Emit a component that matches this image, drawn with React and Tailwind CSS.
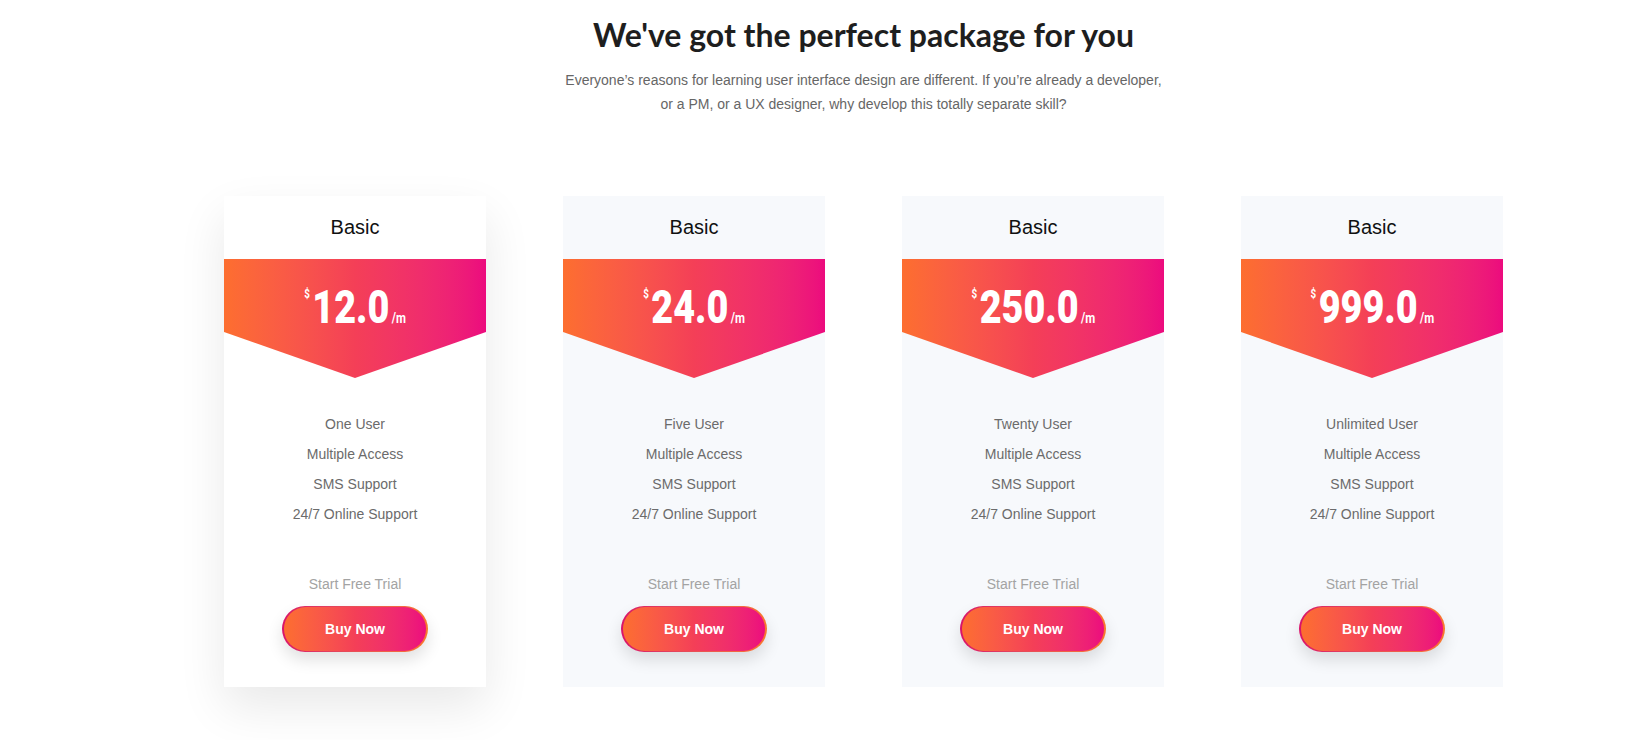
const plans = [
  { price: "12.0", users: "One User", featured: true },
  { price: "24.0", users: "Five User" },
  { price: "250.0", users: "Twenty User" },
  { price: "999.0", users: "Unlimited User" },
];

function Card({ plan }) {
  return (
    <div
      className={
        "flex w-[262px] h-[491px] flex-col items-center " +
        (plan.featured
          ? "bg-white shadow-[0_20px_45px_rgba(0,0,0,0.09)]"
          : "bg-[#f7f9fc]")
      }
    >
      <div className="pt-[17px] text-[20px] leading-[28px] text-[#111]">Basic</div>
      <div className="mt-[18px] h-[119px] w-full bg-linear-to-r from-[#fd6e2f] via-[#f43f57] to-[#ec0a7e] [clip-path:polygon(0_0,100%_0,100%_61.3%,50%_100%,0_61.3%)]">
        <div className="flex justify-center pt-[25px]">
          <div className="scale-x-[0.82] whitespace-nowrap font-['Roboto',sans-serif] font-black text-white text-[46px] leading-[46px]">
            <span className="relative top-[4px] mr-[3px] align-top text-[12px] font-bold leading-[12px]">$</span>
            {plan.price}
            <span className="ml-[3px] text-[14px] font-bold">/m</span>
          </div>
        </div>
      </div>
      <ul className="mt-[31px] flex flex-col items-center text-[14px] leading-[30px] text-[#6b6b6b]">
        <li>{plan.users}</li>
        <li>Multiple Access</li>
        <li>SMS Support</li>
        <li>24/7 Online Support</li>
      </ul>
      <div className="mt-[40px] text-[14px] leading-[30px] text-[#a3a3a3]">Start Free Trial</div>
      <button className="mt-[7px] h-[46px] w-[146px] rounded-full bg-linear-to-r from-[#d8116a] to-[#f8762c] px-[2px] py-[1px] shadow-[0_8px_16px_rgba(0,0,0,0.12)]">
        <span className="flex h-full w-full items-center justify-center rounded-full bg-linear-to-r from-[#fd6e2f] via-[#f43f57] to-[#ec0a7e] text-[14px] font-bold text-white">
          Buy Now
        </span>
      </button>
    </div>
  );
}

export default function App() {
  return (
    <div className="min-h-[740px] bg-white pl-[92px] font-['Liberation_Sans',Arial,sans-serif]">
      <div className="flex flex-col items-center pt-[15px]">
        <h1 className="font-['Lato',sans-serif] text-[32px] font-bold leading-[40px] text-[#1e1e1e]">
          We've got the perfect package for you
        </h1>
        <p className="mt-[13px] text-center text-[14px] leading-[24px] text-[#666]">
          Everyone’s reasons for learning user interface design are different. If you’re already a developer,
          <br />
          or a PM, or a UX designer, why develop this totally separate skill?
        </p>
      </div>
      <div className="mt-[80px] flex justify-center gap-[77px]">
        {plans.map((p) => (
          <Card key={p.price} plan={p} />
        ))}
      </div>
    </div>
  );
}
